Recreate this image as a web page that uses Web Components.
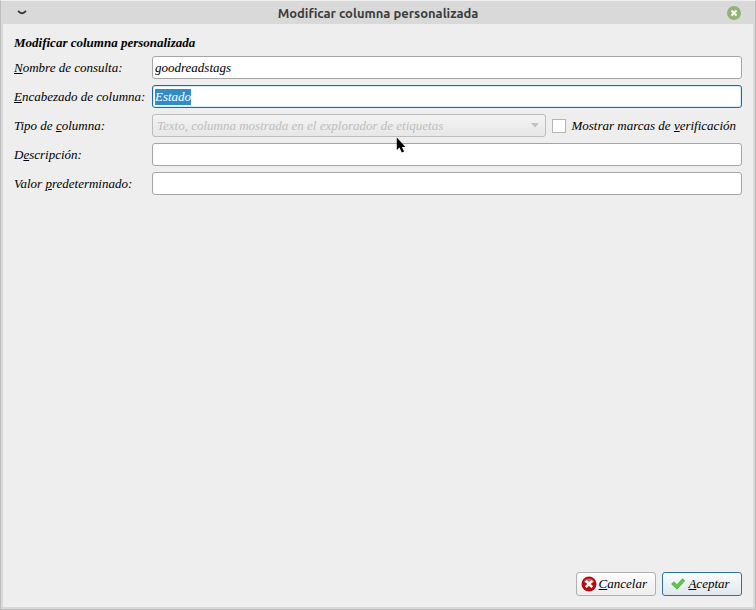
<!DOCTYPE html>
<html lang="es">
<head>
<meta charset="utf-8">
<title>Modificar columna personalizada</title>
<style>
  body { margin: 0; font: italic 13px/15px "Liberation Serif", serif; color: #000; }
</style>
</head>
<body>
<dialog-window>
  <title-bar slot="title">Modificar columna personalizada</title-bar>
  <column-form></column-form>
  <action-button slot="actions" kind="cancel"><u>C</u>ancelar</action-button>
  <action-button slot="actions" kind="accept"><u>A</u>ceptar</action-button>
</dialog-window>
<mouse-pointer></mouse-pointer>

<script>
const define = (name, html, setup) => {
  const template = document.createElement('template');
  template.innerHTML = html;
  customElements.define(name, class extends HTMLElement {
    constructor() {
      super();
      this.attachShadow({ mode: 'open' }).append(template.content.cloneNode(true));
    }
    connectedCallback() { if (setup) setup(this, this.shadowRoot); }
  });
};

define('dialog-window', `
  <style>
    :host {
      display: flex; flex-direction: column; box-sizing: border-box; min-height: 100vh;
      background: #eeeeee; border: 1px solid #bdbdbd; border-top-color: #efefef;
    }
    .frame { flex: 1; display: flex; flex-direction: column; border: 2px solid #d9d9d9; border-top: 0; }
    main { flex: 1; padding: 11px 11px 0; }
    footer { display: flex; justify-content: flex-end; gap: 6px; padding: 11px; }
  </style>
  <slot name="title"></slot>
  <div class="frame">
    <main><slot></slot></main>
    <footer><slot name="actions"></slot></footer>
  </div>`);

define('title-bar', `
  <style>
    :host {
      display: grid; grid-template-columns: 42px 1fr 42px; align-items: center; height: 23px;
      background: #d9d9d9; color: #3d3d3d;
      font: normal 600 13px/21px Ubuntu, "Noto Sans", sans-serif;
    }
    h1 { margin: 0; padding-top: 2px; font: inherit; text-align: center; }
    button { border: 0; padding: 0; background: none; display: block; justify-self: center; }
    svg { display: block; }
  </style>
  <button type="button" aria-label="Menú de la ventana">
    <svg width="10" height="6" viewBox="0 0 10 6"><path d="M1 1 L3.6 2.9 Q5 3.6 6.4 2.9 L9 1" fill="none" stroke="#383838" stroke-width="1.8"/></svg>
  </button>
  <h1><slot></slot></h1>
  <button type="button" aria-label="Cerrar">
    <svg width="14" height="14" viewBox="0 0 14 14"><circle cx="7" cy="7" r="7" fill="#92b372"/><path d="M4.5 4.5 9.5 9.5M9.5 4.5 4.5 9.5" stroke="#fff" stroke-width="2"/></svg>
  </button>`);

define('column-form', `
  <style>
    :host { display: flex; flex-direction: column; gap: 6px; }
    h2 { margin: 0; font: inherit; font-weight: bold; }
    .pair { display: flex; gap: 6px; }
    type-select { flex: 1; }
  </style>
  <h2>Modificar columna personalizada</h2>
  <text-field value="goodreadstags"><u>N</u>ombre de consulta:</text-field>
  <text-field value="Estado" active><u>E</u>ncabezado de columna:</text-field>
  <div class="pair">
    <type-select>Tipo de <u>c</u>olumna:</type-select>
    <check-option>Mostrar marcas de <u>v</u>erificación</check-option>
  </div>
  <text-field>D<u>e</u>scripción:</text-field>
  <text-field>Valor <u>p</u>redeterminado:</text-field>`);

const rowStyle = `
    :host { display: grid; grid-template-columns: 132px minmax(0, 1fr); gap: 6px; align-items: center; }
    label { white-space: nowrap; }`;

define('text-field', `
  <style>${rowStyle}
    input {
      box-sizing: border-box; width: 100%; height: 23px; margin: 0; padding: 0 2px;
      border: 1px solid #a5a5a5; border-radius: 3px; outline: 0;
      background: #fff; color: inherit; font: inherit;
    }
    :host([active]) input { border-color: #1f6c9f; box-shadow: inset 0 0 0 1px #d5edf7; }
    input::selection { background: #308cc6; color: #fff; }
  </style>
  <label for="field"><slot></slot></label>
  <input id="field" type="text">`,
  (host, root) => {
    const input = root.querySelector('input');
    input.value = host.getAttribute('value') || '';
    if (host.hasAttribute('active')) { input.focus(); input.select(); }
  });

define('type-select', `
  <style>${rowStyle}
    .box { position: relative; }
    select {
      appearance: none; display: block; box-sizing: border-box; width: 100%; height: 23px;
      margin: 0; padding: 0 24px 0 4px; border: 1px solid #bcbcbc; border-radius: 3px;
      background: linear-gradient(#f3f3f3, #e7e7e7); color: #bebebe; font: inherit; opacity: 1;
    }
    svg { position: absolute; right: 7px; top: 9px; }
  </style>
  <label for="type"><slot></slot></label>
  <div class="box">
    <select id="type" disabled><option>Texto, columna mostrada en el explorador de etiquetas</option></select>
    <svg width="8" height="5" viewBox="0 0 8 5"><path d="M0 0H8L4 4.5Z" fill="#c2c2c2"/></svg>
  </div>`);

define('check-option', `
  <style>
    :host { display: flex; align-items: center; padding-right: 6px; }
    label { display: flex; align-items: center; gap: 5px; white-space: nowrap; }
    input { appearance: none; box-sizing: border-box; width: 14px; height: 14px; margin: 0; border: 1px solid #b4b4b4; background: #fff; }
  </style>
  <label><input type="checkbox"><span><slot></slot></span></label>`);

define('action-button', `
  <style>
    :host { display: block; }
    button {
      display: flex; align-items: center; justify-content: center; gap: 2px;
      box-sizing: border-box; min-width: 80px; height: 24px; margin: 0; padding: 0 8px 0 4px;
      border: 1px solid #b0b0b0; border-radius: 3px;
      background: linear-gradient(#fdfdfd, #ededed); color: inherit; font: inherit;
    }
    span { padding-bottom: 2px; }
    :host([kind="accept"]) button { border-color: #2a72a3; background: linear-gradient(#fafcfd, #e0e7ec); }
    svg { display: none; }
    :host([kind="cancel"]) .cancel, :host([kind="accept"]) .accept { display: block; }
  </style>
  <button type="button">
    <svg class="cancel" width="16" height="16" viewBox="0 0 16 16">
      <circle cx="8" cy="8" r="7.5" fill="#b40a10"/>
      <path d="M2.6 6A6 6 0 0 1 13.4 6Q8 8.6 2.6 6Z" fill="#cc5f63"/>
      <path d="M4.8 4.8 11.2 11.2M11.2 4.8 4.8 11.2" stroke="#fff" stroke-width="2.6"/>
    </svg>
    <svg class="accept" width="16" height="16" viewBox="0 0 16 16">
      <path d="M1.6 8 4 5.8 7 8.7 12.5 2.8 14.7 4.8 7.1 13.2Z" fill="#5cc943" stroke="#4a9e39" stroke-width=".7" stroke-linejoin="round"/>
    </svg>
    <span><slot></slot></span>
  </button>`);

define('mouse-pointer', `
  <style>
    :host { position: absolute; left: 396px; top: 137px; pointer-events: none; }
    svg { display: block; }
  </style>
  <svg width="11" height="17" viewBox="0 0 11 17"><path d="M.8 .6V13L3.5 10.6 5.8 15.6 8.1 14.6 5.9 9.9H9.4Z" fill="#000"/></svg>`);
</script>
</body>
</html>
